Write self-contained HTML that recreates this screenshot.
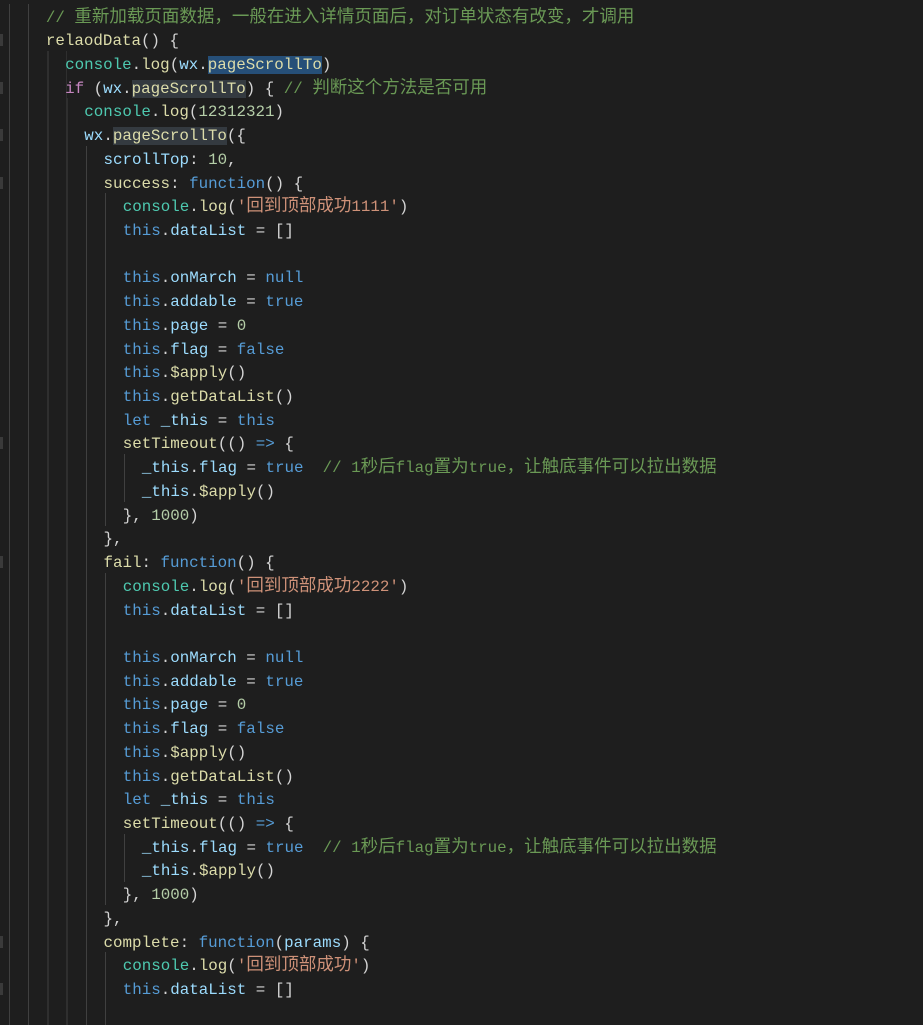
<!DOCTYPE html>
<html><head><meta charset="utf-8"><style>
html,body{margin:0;padding:0;background:#1e1e1e;width:923px;height:1025px;overflow:hidden}
#c{position:relative;font-family:"Liberation Mono","Noto Sans CJK SC",monospace;font-size:15.85px;color:#d4d4d4}
.l{position:absolute;left:0;height:23.72px;line-height:23.72px;white-space:pre}
.g{position:absolute;left:9px;top:0;height:23.72px;background:repeating-linear-gradient(to right,#404040 0 1px,transparent 1px 19.2px)}
.t{position:absolute;top:0}
.z{font-family:"Noto Sans CJK SC",sans-serif;font-size:17.5px;line-height:0}
.cm{color:#6a9955}.kw{color:#569cd6}.if{color:#c586c0}.cl{color:#4ec9b0}.fn{color:#dcdcaa}.pr{color:#9cdcfe}.nu{color:#b5cea8}.st{color:#ce9178}
.sel{background:#264f78}.hl{background:#343a40}
.m{position:absolute;left:0;width:3px;height:12px;background:#3a3a3a}
</style></head><body><div id="c">
<script>
const L=[
[2,'<span class="cm">// 重新加载页面数据，一般在进入详情页面后，对订单状态有改变，才调用</span>'],
[2,'<span class="fn">relaodData</span>() {'],
[3,'<span class="cl">console</span>.<span class="fn">log</span>(<span class="pr">wx</span>.<span class="fn sel">pageScrollTo</span>)'],
[3,'<span class="if">if</span> (<span class="pr">wx</span>.<span class="fn hl">pageScrollTo</span>) { <span class="cm">// 判断这个方法是否可用</span>'],
[4,'<span class="cl">console</span>.<span class="fn">log</span>(<span class="nu">12312321</span>)'],
[4,'<span class="pr">wx</span>.<span class="fn hl">pageScrollTo</span>({'],
[5,'<span class="pr">scrollTop</span>: <span class="nu">10</span>,'],
[5,'<span class="fn">success</span>: <span class="kw">function</span>() {'],
[6,'<span class="cl">console</span>.<span class="fn">log</span>(<span class="st">\'回到顶部成功1111\'</span>)'],
[6,'<span class="kw">this</span>.<span class="pr">dataList</span> = []'],
[6,''],
[6,'<span class="kw">this</span>.<span class="pr">onMarch</span> = <span class="kw">null</span>'],
[6,'<span class="kw">this</span>.<span class="pr">addable</span> = <span class="kw">true</span>'],
[6,'<span class="kw">this</span>.<span class="pr">page</span> = <span class="nu">0</span>'],
[6,'<span class="kw">this</span>.<span class="pr">flag</span> = <span class="kw">false</span>'],
[6,'<span class="kw">this</span>.<span class="fn">$apply</span>()'],
[6,'<span class="kw">this</span>.<span class="fn">getDataList</span>()'],
[6,'<span class="kw">let</span> <span class="pr">_this</span> = <span class="kw">this</span>'],
[6,'<span class="fn">setTimeout</span>(() <span class="kw">=&gt;</span> {'],
[7,'<span class="pr">_this</span>.<span class="pr">flag</span> = <span class="kw">true</span>  <span class="cm">// 1秒后flag置为true，让触底事件可以拉出数据</span>'],
[7,'<span class="pr">_this</span>.<span class="fn">$apply</span>()'],
[6,'}, <span class="nu">1000</span>)'],
[5,'},'],
[5,'<span class="fn">fail</span>: <span class="kw">function</span>() {'],
[6,'<span class="cl">console</span>.<span class="fn">log</span>(<span class="st">\'回到顶部成功2222\'</span>)'],
[6,'<span class="kw">this</span>.<span class="pr">dataList</span> = []'],
[6,''],
[6,'<span class="kw">this</span>.<span class="pr">onMarch</span> = <span class="kw">null</span>'],
[6,'<span class="kw">this</span>.<span class="pr">addable</span> = <span class="kw">true</span>'],
[6,'<span class="kw">this</span>.<span class="pr">page</span> = <span class="nu">0</span>'],
[6,'<span class="kw">this</span>.<span class="pr">flag</span> = <span class="kw">false</span>'],
[6,'<span class="kw">this</span>.<span class="fn">$apply</span>()'],
[6,'<span class="kw">this</span>.<span class="fn">getDataList</span>()'],
[6,'<span class="kw">let</span> <span class="pr">_this</span> = <span class="kw">this</span>'],
[6,'<span class="fn">setTimeout</span>(() <span class="kw">=&gt;</span> {'],
[7,'<span class="pr">_this</span>.<span class="pr">flag</span> = <span class="kw">true</span>  <span class="cm">// 1秒后flag置为true，让触底事件可以拉出数据</span>'],
[7,'<span class="pr">_this</span>.<span class="fn">$apply</span>()'],
[6,'}, <span class="nu">1000</span>)'],
[5,'},'],
[5,'<span class="fn">complete</span>: <span class="kw">function</span>(<span class="pr">params</span>) {'],
[6,'<span class="cl">console</span>.<span class="fn">log</span>(<span class="st">\'回到顶部成功\'</span>)'],
[6,'<span class="kw">this</span>.<span class="pr">dataList</span> = []'],
[6,''],
[6,'']
];
const H=23.72,T=6.5;let h='';
const marks=[1,3,5,7,18,23,39,41];
L.forEach((a,i)=>{const y=T+i*H;const gl=(i===0||i===1)?2:a[0];
const s=a[1].replace(/([\u3000-\u9fff\uff00-\uffef]+)/g,'<span class="z">$1</span>');
h+='<div class="l" style="top:'+y+'px;width:923px"><div class="g" style="width:'+(gl*19.2)+'px;top:-3px;height:'+(H+0.5)+'px"></div><div class="t" style="left:'+(9+a[0]*19.2-1.5)+'px">'+s+'</div></div>';
if(marks.includes(i))h+='<div class="m" style="top:'+(y+4)+'px"></div>';});
document.getElementById('c').innerHTML=h;
</script>
</div></body></html>
